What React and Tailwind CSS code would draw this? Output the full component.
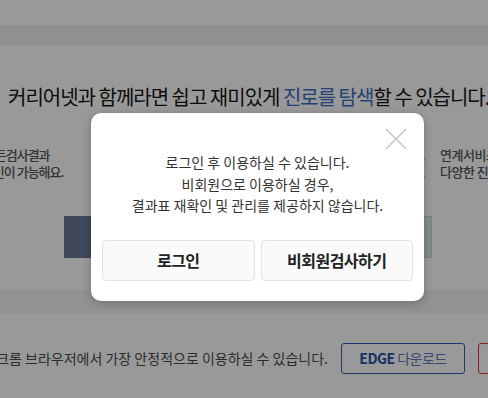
export default function App() {
  return (
    <div className="relative w-[488px] h-[398px] overflow-hidden bg-white font-['Noto_Sans_CJK_KR','Noto_Sans',sans-serif] text-[#222]">
      {/* page underneath */}
      <div className="h-[25px] bg-white" />
      <div className="h-[20px] bg-[#f1f1f1]" />
      <div className="h-[245px] bg-white">
        <div className="pt-[38px] pl-[8px] whitespace-nowrap text-[20px] leading-[27px] tracking-[-1px] text-[#151515]">
          커리어넷과 함께라면 쉽고 재미있게 <span className="text-[#3a6fc4]">진로를 탐색</span>할 수 있습니다.
        </div>
        <div className="mt-[36px] flex text-[13px] leading-[17px] font-medium tracking-[-1px] text-[#555] whitespace-nowrap">
          <div className="w-[61px] shrink-0 flex justify-end">
            <p className="w-[112px] shrink-0">
              응시한 모든검사결과
              <br />
              결과재확인이 가능해요.
            </p>
          </div>
          <p className="w-[367px] shrink-0 text-right pr-[4px]">
            결과를 바로
            <br />
            확인하세요
          </p>
          <p className="ml-[12px] shrink-0 tracking-[-0.5px]">
            연계서비스로
            <br />
            다양한 진로정보
          </p>
        </div>
        <div className="mt-[36px] w-[432px] flex justify-between">
          <div className="ml-[64px] w-[150px] h-[42px] bg-[#6a7b98]" />
          <div className="w-[130px] h-[42px] bg-[#dcebe5] border border-[#c5d6cf]" />
        </div>
      </div>
      <div className="h-[23px] bg-[#f4f4f4]" />
      <div className="pt-[30px] w-[602px] flex justify-end items-center gap-[13px]">
        <span className="whitespace-nowrap text-[14px] text-[#4a4a4a]">
          구글 크롬 브라우저에서 가장 안정적으로 이용하실 수 있습니다.
        </span>
        <button className="w-[124px] h-[31px] shrink-0 rounded-[3px] border border-[#2f5fb8] text-[14px] tracking-[-0.5px] text-[#5a7cbd]">
          <b className="text-[#2453a8]">EDGE</b> 다운로드
        </button>
        <button className="w-[124px] h-[31px] shrink-0 rounded-[3px] border border-[#d23a3a] text-[14px] text-[#d23a3a]">
          크롬 다운로드
        </button>
      </div>

      {/* dim overlay */}
      <div className="absolute inset-0 bg-black/40" />

      {/* modal */}
      <div className="absolute left-[91px] top-[113px] w-[333px] h-[188px] rounded-[10px] bg-white shadow-[0_2px_8px_rgba(0,0,0,0.25)] px-[11px] pt-[39px]">
        <button className="absolute right-[17px] top-[15px] w-[22px] h-[22px]">
          <svg viewBox="0 0 22 22" className="w-[22px] h-[22px]" fill="none" stroke="#c4c4c4" strokeWidth="1.4">
            <path d="M1 1L21 21M21 1L1 21" />
          </svg>
        </button>
        <p className="text-center text-[14px] leading-[21.5px] text-[#333]">
          로그인 후 이용하실 수 있습니다.
          <br />
          비회원으로 이용하실 경우,
          <br />
          결과표 재확인 및 관리를 제공하지 않습니다.
        </p>
        <div className="mt-[23px] flex gap-[6px]">
          <button className="flex-1 h-[41px] rounded-[4px] border border-[#e3e3e3] bg-[#fafafa] text-[16px] font-bold tracking-[-0.5px] text-[#222]">
            로그인
          </button>
          <button className="flex-1 h-[41px] rounded-[4px] border border-[#e3e3e3] bg-[#fafafa] text-[16px] font-bold tracking-[-0.5px] text-[#222]">
            비회원검사하기
          </button>
        </div>
      </div>
    </div>
  );
}
